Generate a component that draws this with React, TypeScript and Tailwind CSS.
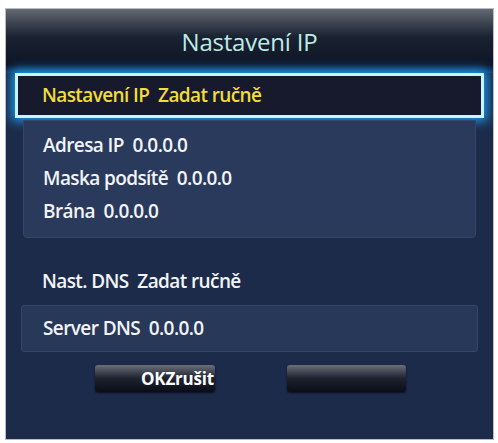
import React from 'react';

const FONT = { fontFamily: '"Open Sans", "Noto Sans", sans-serif' };

function Row({ label, value }: { label: string; value: string }) {
  return (
    <div className="h-[33px] flex items-center pl-[19px] text-[19px] font-semibold text-[#f2f4f8] tracking-[-0.6px]">
      {label}&nbsp;&nbsp;{value}
    </div>
  );
}

export default function App() {
  return (
    <div className="w-[498px] h-[443px] bg-white pt-[8px] pl-[5px]" style={FONT}>
      <div className="w-[489px] h-[432px] border border-[#b9bcc2] bg-[#1d2b4a] flex flex-col overflow-hidden">
        {/* title bar */}
        <div className="h-[56px] shrink-0 bg-gradient-to-b from-[#646a72] via-[#1a2131] to-[#0e1526] flex items-center justify-center pt-[10px]">
          <span className="text-[24px] text-[#bdece6] tracking-[-0.2px]">Nastavení IP</span>
        </div>

        <div className="h-[8px] shrink-0 bg-gradient-to-b from-[#0e1526] to-[#0f3f77]" />

        {/* focused row */}
        <div className="mx-[9px] h-[45px] shrink-0 border-[3px] border-[#c6f6ff] bg-[#161a2c] shadow-[0_0_10px_3px_#1b9ef0] flex items-center pl-[24px]">
          <span className="text-[19px] font-semibold text-[#f1dc3a] tracking-[-0.6px]">Nastavení IP&nbsp;&nbsp;Zadat ručně</span>
        </div>

        {/* address group */}
        <div className="mx-[17px] mt-[2px] h-[118px] shrink-0 rounded-b-[4px] border border-[#34466a] bg-[#293a5c] pt-[8px]">
          <Row label="Adresa IP" value="0.0.0.0" />
          <Row label="Maska podsítě" value="0.0.0.0" />
          <Row label="Brána" value="0.0.0.0" />
        </div>

        <div className="h-[67px] shrink-0 flex items-end pb-[10px] pl-[36px] text-[19px] font-semibold text-[#f2f4f8] tracking-[-0.6px]">
          Nast. DNS&nbsp;&nbsp;Zadat ručně
        </div>

        <div className="mx-[15px] h-[47px] shrink-0 rounded-[3px] border border-[#34466a] bg-[#283859] flex items-center pl-[21px] text-[19px] font-semibold text-[#f2f4f8] tracking-[-0.6px]">
          Server DNS&nbsp;&nbsp;0.0.0.0
        </div>

        {/* buttons */}
        <div className="mt-[13px] flex pl-[89px] gap-[72px]">
          <div className="w-[120px] h-[27px] rounded-[3px] bg-gradient-to-b from-[#6b7079] via-[#1e2230] to-[#0b0d16] shadow-[0_1px_2px_#0a1020] flex items-center pl-[46px] overflow-visible whitespace-nowrap">
            <span className="text-[17px] font-bold text-white tracking-[-0.2px]">OKZrušit</span>
          </div>
          <div className="w-[119px] h-[27px] rounded-[3px] bg-gradient-to-b from-[#6b7079] via-[#1e2230] to-[#0b0d16] shadow-[0_1px_2px_#0a1020]" />
        </div>
      </div>
    </div>
  );
}
